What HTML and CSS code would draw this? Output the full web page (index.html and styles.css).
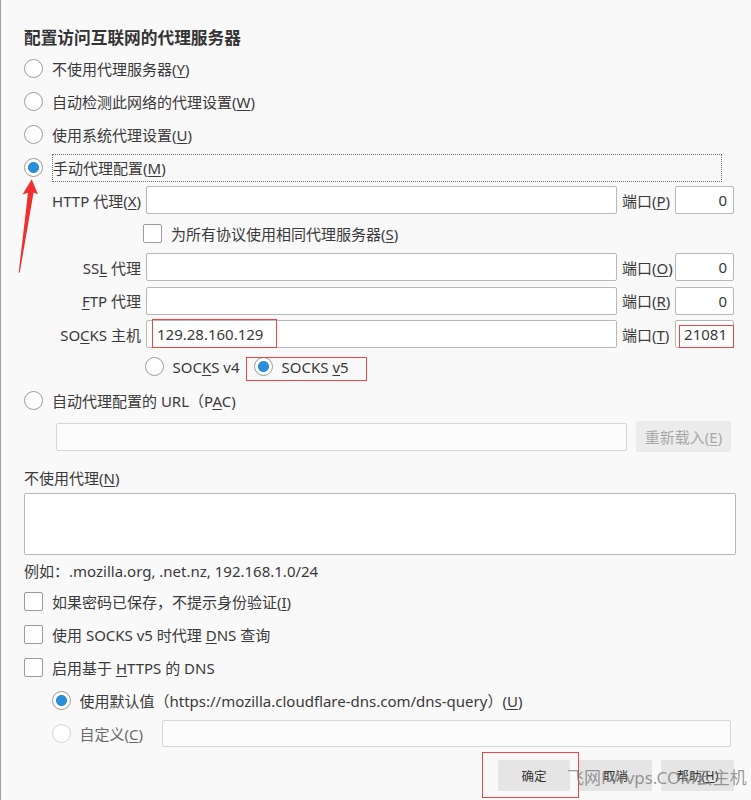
FILE: index.html
```html
<!DOCTYPE html>
<html lang="zh-CN">
<head>
<meta charset="utf-8">
<title>连接设置</title>
<link rel="stylesheet" href="styles.css">
</head>
<body>
<div class="dialog">
  <h1 class="title">配置访问互联网的代理服务器</h1>
  <div class="options">
    <div class="row"><span class="radio"></span><span>不使用代理服务器(<u>Y</u>)</span></div>
    <div class="row"><span class="radio"></span><span>自动检测此网络的代理设置(<u>W</u>)</span></div>
    <div class="row"><span class="radio"></span><span>使用系统代理设置(<u>U</u>)</span></div>
    <div class="row"><span class="radio checked"></span><span class="focus">手动代理配置(<u>M</u>)</span></div>
  </div>

  <div class="grid">
    <span class="lbl">HTTP 代理(<u>X</u>)</span>
    <div class="input"></div>
    <span class="plbl">端口(<u>P</u>)</span>
    <div class="input port">0</div>

    <div class="span-all"><span class="checkbox same-box"></span><span>为所有协议使用相同代理服务器(<u>S</u>)</span></div>

    <span class="lbl">SS<u>L</u> 代理</span>
    <div class="input"></div>
    <span class="plbl">端口(<u>O</u>)</span>
    <div class="input port">0</div>

    <span class="lbl"><u>F</u>TP 代理</span>
    <div class="input"></div>
    <span class="plbl">端口(<u>R</u>)</span>
    <div class="input port">0</div>

    <span class="lbl">SO<u>C</u>KS 主机</span>
    <div class="input host">129.28.160.129</div>
    <span class="plbl">端口(<u>T</u>)</span>
    <div class="input port">21081</div>

    <div class="span-all versions">
      <span class="radio v4"></span><span class="v4-text">SOC<u>K</u>S v4</span>
      <span class="radio checked"></span><span>SOCKS <u>v</u>5</span>
    </div>
  </div>

  <div class="row pac-row"><span class="radio"></span><span>自动代理配置的 URL（P<u>A</u>C)</span></div>
  <div class="pac-line">
    <div class="input disabled"></div>
    <div class="btn reload">重新载入(<u>E</u>)</div>
  </div>

  <div class="section-label">不使用代理(<u>N</u>)</div>
  <div class="textarea"></div>
  <div class="example">例如：.mozilla.org, .net.nz, 192.168.1.0/24</div>

  <div class="checks">
    <div class="row"><span class="checkbox"></span><span>如果密码已保存，不提示身份验证(<u>I</u>)</span></div>
    <div class="row"><span class="checkbox"></span><span>使用 SOCKS v5 时代理 <u>D</u>NS 查询</span></div>
    <div class="row"><span class="checkbox"></span><span>启用基于 <u>H</u>TTPS 的 DNS</span></div>
    <div class="row sub"><span class="radio checked"></span><span>使用默认值（https://mozilla.cloudflare-dns.com/dns-query）(<u>U</u>)</span></div>
    <div class="row sub"><span class="radio dis"></span><span class="dis-text">自定义(<u>C</u>)</span><div class="input disabled custom"></div></div>
  </div>

  <div class="buttons">
    <div class="btn dlg w72">确定</div>
    <div class="btn dlg w73">取消</div>
    <div class="btn dlg w73">帮助(<u>H</u>)</div>
  </div>
</div>

<div class="mark box-ip"></div>
<div class="mark box-port"></div>
<div class="mark box-v5"></div>
<div class="mark box-ok"></div>
<svg class="arrow" width="60" height="290" viewBox="0 0 60 290" aria-hidden="true">
  <path d="M31.7 179.3 L37.9 194.2 L33.6 192.6 L19.7 272.8 L18.7 272.5 L28 192.8 L22.5 194.4 Z" fill="#f0302e"/>
</svg>
<div class="watermark">飞网FWvps.COM云主机</div>
</body>
</html>
```

FILE: styles.css
```css
* { box-sizing: border-box; }
html, body { margin: 0; padding: 0; }
body {
  width: 751px;
  height: 800px;
  overflow: hidden;
  position: relative;
  background: #f9f9f9;
  font-family: "Noto Sans", "Noto Sans CJK SC", sans-serif;
  font-size: 15px;
  color: #3a3a3a;
}
u { text-decoration-thickness: 1px; text-underline-offset: 2px; }

.dialog {
  border-left: 1px solid #a0a0a0;
  padding: 28px 15px 0 23px;
  height: 800px;
}
.title {
  margin: 0 0 4px;
  font-size: 16.7px;
  font-weight: bold;
  line-height: 20px;
  color: #333;
}
.row {
  display: flex;
  align-items: center;
  height: 33px;
  white-space: nowrap;
}
.radio {
  flex: none;
  width: 19px;
  height: 19px;
  border: 1px solid #9c9c9c;
  border-radius: 50%;
  background: #fff;
  margin-right: 9px;
}
.radio.checked {
  background: radial-gradient(circle, #2a8fd8 0 5.2px, #fff 5.8px);
}
.radio.dis { border-color: #d2d2d2; }
.dis-text { color: #6a6a6a; }
.checkbox {
  flex: none;
  width: 19px;
  height: 19px;
  border: 1px solid #9c9c9c;
  border-radius: 2px;
  background: #fff;
  margin-right: 9px;
}
.focus {
  flex: 1;
  height: 28px;
  margin-right: 14px;
  border: 1px dotted #707070;
  display: flex;
  align-items: center;
}

.grid {
  display: grid;
  grid-template-columns: 117px 471px 48px 59px;
  grid-template-rows: 28px 28px 28px 28px 28px 26px;
  column-gap: 5px;
  row-gap: 5.5px;
  margin-top: 2px;
  align-items: center;
  white-space: nowrap;
}
.lbl { text-align: right; }
.input {
  height: 28px;
  border: 1px solid #b8b8b8;
  border-radius: 2px;
  background: #fff;
  display: flex;
  align-items: center;
  padding: 0 6px;
}
.input.port { justify-content: flex-end; }
.input.host { padding-left: 10px; }
.span-all {
  grid-column: 2 / 5;
  display: flex;
  align-items: center;
  margin-left: -3px;
}
.versions { margin-left: -1.5px; }
.v4-text { margin-right: 14px; }

.pac-row { margin-top: 4px; }
.pac-line {
  display: flex;
  align-items: center;
  gap: 9px;
  margin-top: 4.5px;
  padding-left: 32px;
  padding-right: 5px;
  height: 31px;
}
.input.disabled {
  border-color: #d6d6d6;
  background: #fbfbfb;
}
.pac-line .input { flex: 1; }
.btn {
  display: flex;
  align-items: center;
  justify-content: center;
  border-radius: 2px;
  white-space: nowrap;
}
.reload {
  width: 95px;
  height: 31px;
  background: #ececec;
  color: #a9a9a9;
}

.section-label { margin-top: 16px; line-height: 20px; }
.textarea {
  margin-top: 5px;
  height: 62px;
  border: 1px solid #b8b8b8;
  border-radius: 2px;
  background: #fff;
}
.example { margin-top: 6px; line-height: 20px; }
.checks { margin-top: 3.5px; }
.sub { padding-left: 27.5px; }
.input.custom {
  flex: 1;
  height: 27px;
  margin-left: 19px;
  margin-right: 5px;
}

.buttons {
  display: flex;
  justify-content: flex-end;
  gap: 9px;
  margin-top: 10.5px;
  padding-right: 2px;
}
.dlg {
  height: 31px;
  background: #e5e5e5;
  color: #333;
  font-size: 12.5px;
}
.w72 { width: 72px; }
.w73 { width: 73px; }

.mark {
  position: absolute;
  border: 1.5px solid #ee4646;
}
.box-ip { left: 152px; top: 319px; width: 125px; height: 29px; }
.box-port { left: 679px; top: 325px; width: 55px; height: 23px; }
.box-v5 { left: 246px; top: 357px; width: 121px; height: 24px; }
.box-ok { left: 482px; top: 752px; width: 97px; height: 46px; }
.arrow { position: absolute; left: 0; top: 0; }
.watermark {
  position: absolute;
  left: 567px;
  top: 768px;
  font-size: 17px;
  line-height: 20px;
  color: rgba(120, 120, 120, 0.75);
  white-space: nowrap;
}
```
